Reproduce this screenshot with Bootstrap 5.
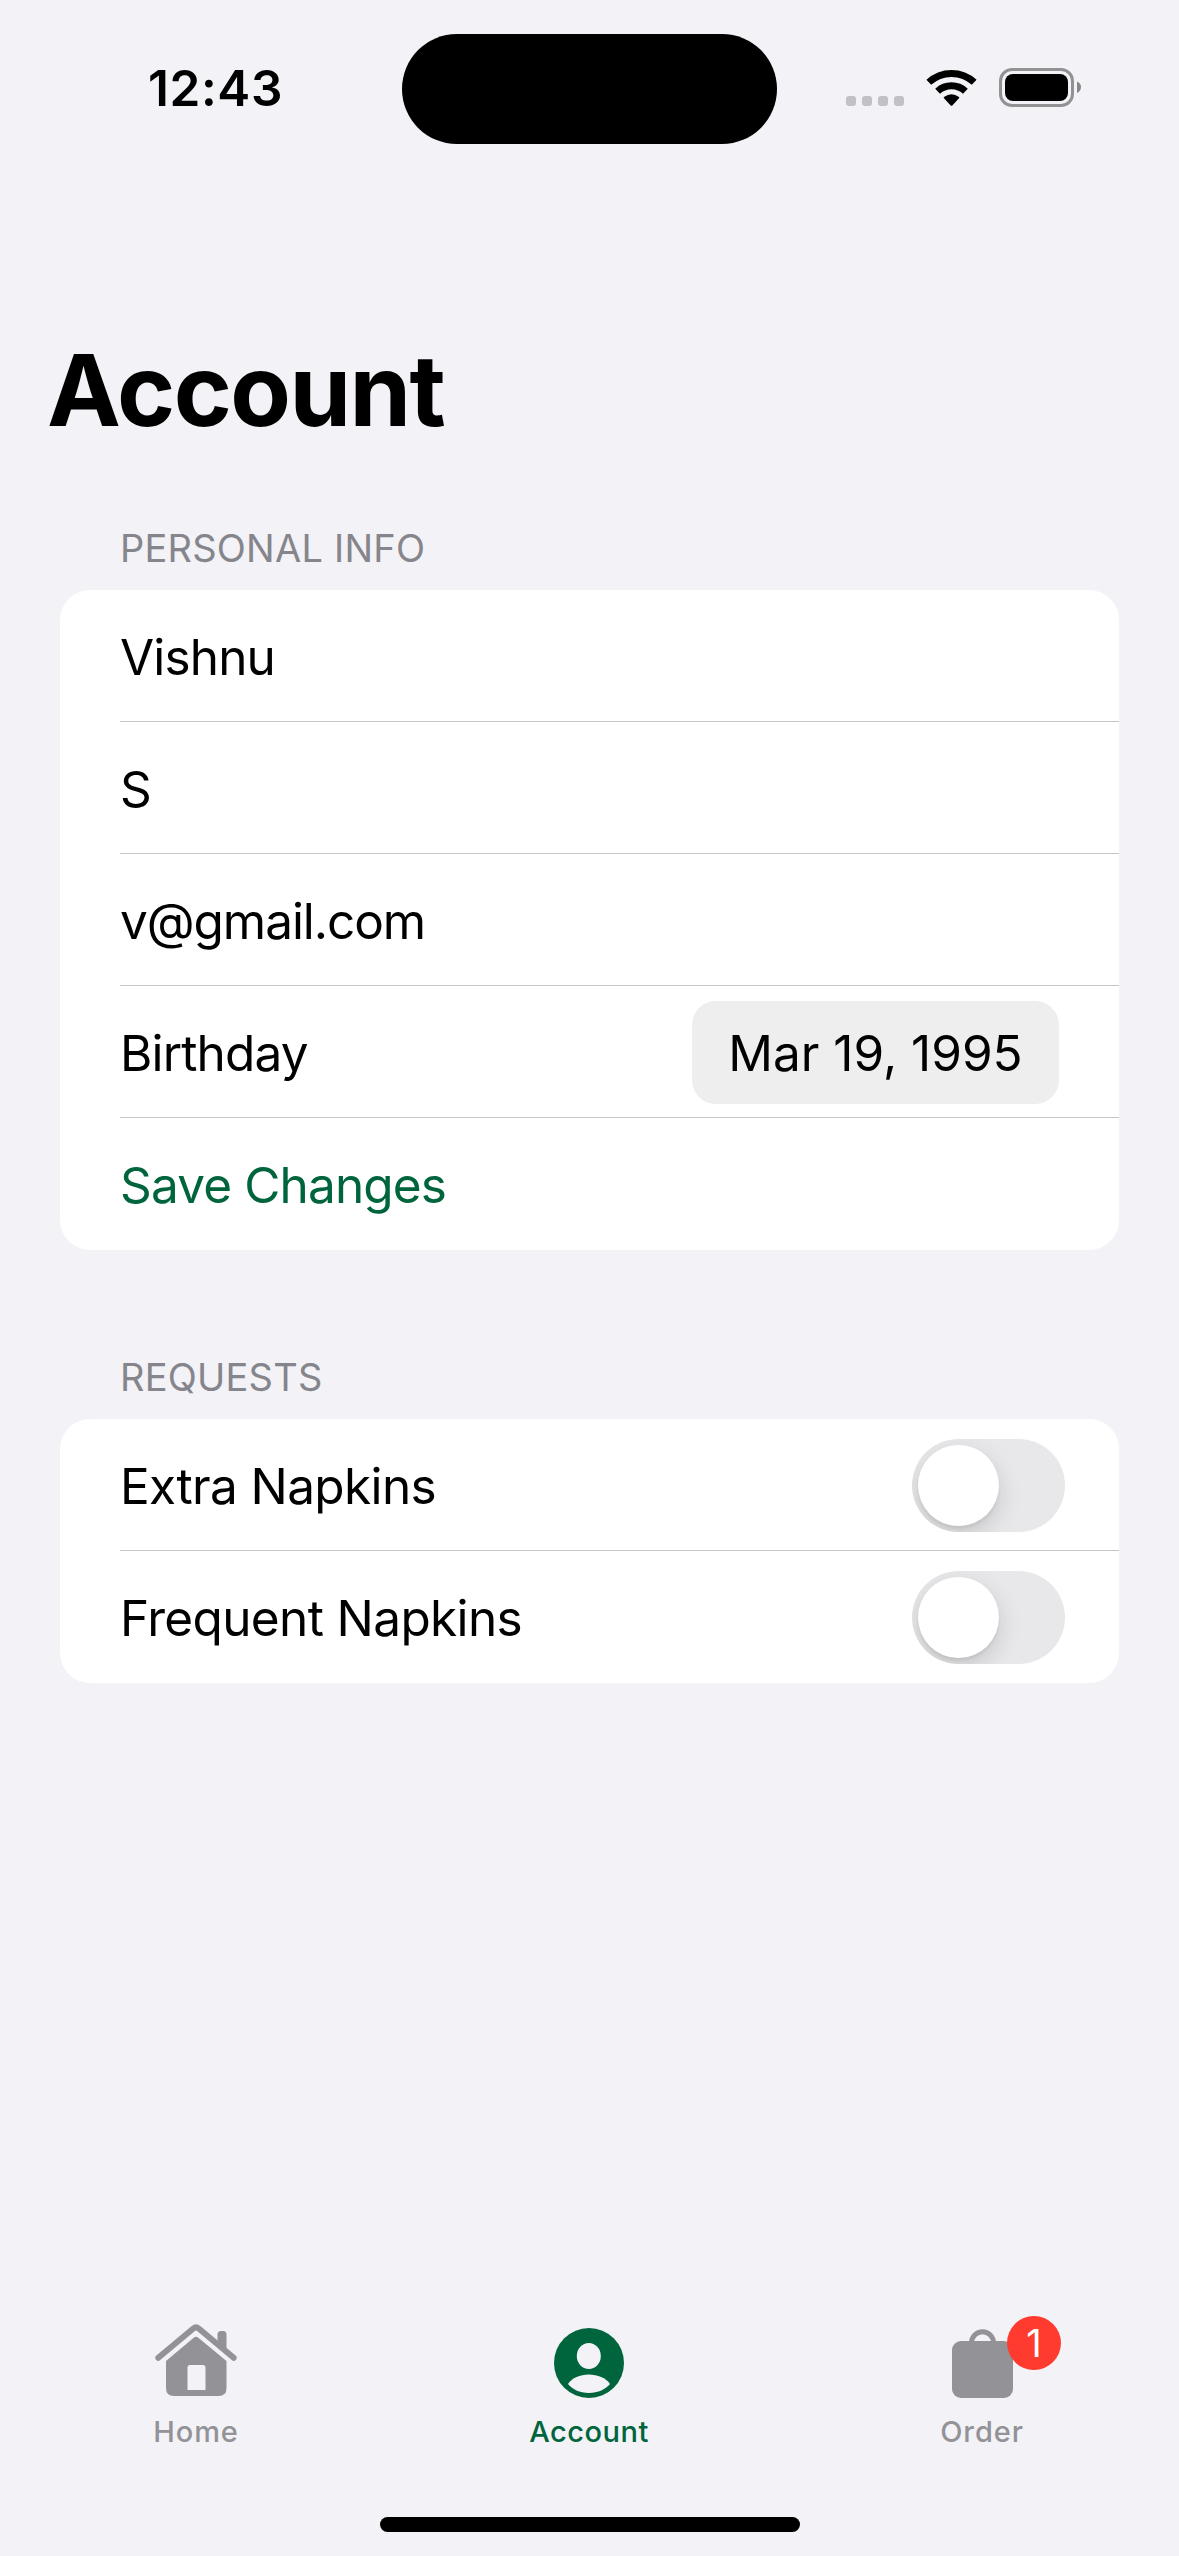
<!DOCTYPE html>
<html lang="en">
<head>
<meta charset="utf-8">
<meta name="viewport" content="width=device-width, initial-scale=1">
<title>Account</title>
<link href="https://cdn.jsdelivr.net/npm/bootstrap@5.3.0/dist/css/bootstrap.min.css" rel="stylesheet">
<style>
  body { background: #f2f2f7; color: #000; font-family: Inter, "Liberation Sans", sans-serif; font-size: 49.5px; line-height: 60px; height: 2556px; }
  .status-bar, .status-side { height: 177px; }
  .status-side { width: 402px; padding-bottom: 1px; }
  .clock { font-weight: 600; letter-spacing: .6px; padding-left: 148px; }
  .island { width: 375px; height: 110px; border-radius: 55px; margin-top: 34px; background: #000; }
  .page-title { font-size: 99px; font-weight: 700; line-height: 120px; letter-spacing: -1.6px; margin: 153px 0 0 47px; }
  .group-label { font-size: 38px; line-height: 46px; letter-spacing: .22px; color: #85858b; padding-left: 120px; }
  .first-label { margin-top: 75px; margin-bottom: 19px; }
  .second-label { margin-top: 104px; margin-bottom: 19px; }
  .panel { margin: 0 60px; border-radius: 30px; background: #fff; padding-left: 60px; letter-spacing: -.85px; }
  .panel-row { height: 132px; padding: 2px 54px 0 0; border-bottom: 1px solid #c6c6c8; }
  .panel-row:last-child { border-bottom: 0; }
  .requests { letter-spacing: -.63px; }
  .email { letter-spacing: -1.05px; }
  .brand { color: #00643c; }
  .date-pill { width: 367px; height: 103px; margin-right: 6px; margin-top: -1px; padding-top: 2px; border-radius: 24px; background: #eee; letter-spacing: 0; }
  .toggle { width: 153px; height: 93px; border-radius: 47px; background: #e8e8ea; padding: 6px; margin-top: -1px; }
  .thumb { width: 81px; height: 81px; border-radius: 50%; background: #fff; box-shadow: 0 9px 24px rgba(0,0,0,.15), 0 3px 3px rgba(0,0,0,.06); }
  .tab-bar { height: 249px; color: #929297; }
  .tab-icon { height: 98px; }
  .tab-text { font-size: 29px; line-height: 36px; font-weight: 500; letter-spacing: .9px; margin-top: 9px; padding-right: 1px; }
  .tab-text-active { letter-spacing: .5px; }
  .count { left: calc(50% + 24.5px); top: 9px; width: 54px; height: 54px; border-radius: 27px; background: #ff3b30; color: #fff; font-size: 38px; line-height: 54px; }
  .home-bar { width: 420px; height: 15px; border-radius: 8px; background: #000; margin-bottom: 24px; }
  svg { display: block; }
</style>
</head>
<body class="d-flex flex-column overflow-hidden">
  <header class="status-bar d-flex flex-shrink-0">
    <div class="status-side d-flex align-items-center"><span class="clock">12:43</span></div>
    <div class="island"></div>
    <div class="status-side d-flex align-items-center">
      <svg width="402" height="60" viewBox="777 58 402 60">
        <g fill="#c2c1c6"><rect x="846" y="96" width="10" height="10" rx="3"/><rect x="862" y="96" width="10" height="10" rx="3"/><rect x="878" y="96" width="10" height="10" rx="3"/><rect x="894" y="96" width="10" height="10" rx="3"/></g>
        <g fill="none" stroke="#000" stroke-width="7"><path d="M928.8 82.3A33.4 33.4 0 0 1 974.2 82.3"/><path d="M937.6 91.2A20.5 20.5 0 0 1 965.4 91.2"/></g>
        <path d="M944 98.2q-.6-.6 0-1.200Q951.500 91.600 959 97q.6.600 0 1.200L952.300 105.500q-.8.700-1.600 0z"/>
        <rect x="1000.500" y="69.500" width="72" height="36" rx="11.500" fill="none" stroke="#929295" stroke-width="3"/>
        <rect x="1005" y="74" width="63" height="27" rx="8"/>
        <path d="M1077 81.500Q1081 83 1081 87T1077 93z" fill="#88888b"/>
      </svg>
    </div>
  </header>

  <main class="flex-grow-1">
    <h1 class="page-title">Account</h1>
    <div class="group-label first-label">PERSONAL INFO</div>
    <section class="panel">
      <div class="panel-row d-flex align-items-center">Vishnu</div>
      <div class="panel-row d-flex align-items-center">S</div>
      <div class="panel-row d-flex align-items-center email">v@gmail.com</div>
      <div class="panel-row d-flex align-items-center justify-content-between">
        <span>Birthday</span>
        <div class="date-pill d-flex align-items-center justify-content-center">Mar 19, 1995</div>
      </div>
      <div class="panel-row d-flex align-items-center brand">Save Changes</div>
    </section>
    <div class="group-label second-label">REQUESTS</div>
    <section class="panel requests">
      <div class="panel-row d-flex align-items-center justify-content-between">
        <span>Extra Napkins</span>
        <div class="toggle overflow-hidden"><div class="thumb"></div></div>
      </div>
      <div class="panel-row d-flex align-items-center justify-content-between">
        <span>Frequent Napkins</span>
        <div class="toggle overflow-hidden"><div class="thumb"></div></div>
      </div>
    </section>
  </main>

  <nav class="tab-bar d-flex flex-column flex-shrink-0">
    <div class="row g-0 flex-grow-1 text-center">
      <div class="col-4 d-flex flex-column align-items-center">
        <div class="tab-icon">
          <svg width="100" height="98" viewBox="146.500 2307 100 98" fill="#929297">
            <path d="M157.800 2357.800 192.800 2328.500q2.700-2.200 5.400 0L233.200 2357.800" fill="none" stroke="#929297" stroke-width="6" stroke-linecap="round" stroke-linejoin="round"/>
            <path d="M217 2342v-7.500q0-3.500 3.500-3.500h2q3.500 0 3.500 3.500V2350z"/>
            <path fill-rule="evenodd" d="M165.500 2361 193.500 2337.500q2-1.500 4 0L226 2361V2388q0 8-8 8H173.500q-8 0-8-8zM187 2390h18v-22.500q0-2.500-2.500-2.500h-13q-2.500 0-2.500 2.500z"/>
          </svg>
        </div>
        <div class="tab-text">Home</div>
      </div>
      <div class="col-4 d-flex flex-column align-items-center brand">
        <div class="tab-icon">
          <svg width="100" height="98" viewBox="540 2307 100 98">
            <circle cx="589" cy="2363" r="35" fill="#00643c"/>
            <ellipse cx="588.800" cy="2356" rx="12" ry="13" fill="#f2f2f7"/>
            <path d="M568 2384C572 2378 580 2374.500 588.800 2374.500S606 2378 610 2384C606 2389 598 2393 588.800 2393S572 2389 568 2384z" fill="#f2f2f7"/>
          </svg>
        </div>
        <div class="tab-text tab-text-active">Account</div>
      </div>
      <div class="col-4 d-flex flex-column align-items-center position-relative">
        <div class="tab-icon">
          <svg width="100" height="98" viewBox="933 2307 100 98">
            <path d="M971.500 2343a11 11.200 0 0 1 22 0" fill="none" stroke="#929297" stroke-width="5"/>
            <rect x="952" y="2341" width="61" height="57" rx="9" fill="#929297"/>
          </svg>
        </div>
        <span class="count position-absolute">1</span>
        <div class="tab-text">Order</div>
      </div>
    </div>
    <div class="home-bar mx-auto"></div>
  </nav>
<script src="https://cdn.jsdelivr.net/npm/bootstrap@5.3.0/dist/js/bootstrap.bundle.min.js"></script>
</body>
</html>
